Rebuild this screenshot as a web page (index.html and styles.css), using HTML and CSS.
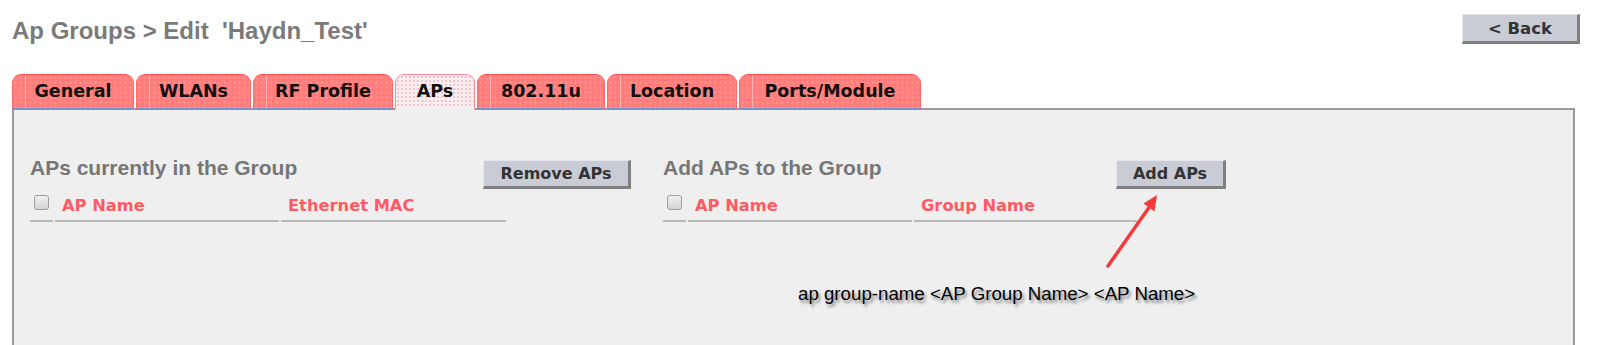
FILE: index.html
```html
<!DOCTYPE html>
<html>
<head>
<meta charset="utf-8">
<title>Ap Groups Edit</title>
<link rel="stylesheet" href="styles.css">
</head>
<body>
<div class="page">
  <header class="topbar">
    <h1 class="page-title">Ap Groups &gt; Edit&nbsp;&nbsp;'Haydn_Test'</h1>
    <button class="btn btn-back">&lt; Back</button>
  </header>

  <nav class="tabs">
    <span class="tab tab-general">General</span>
    <span class="tab tab-wlans">WLANs</span>
    <span class="tab tab-rf">RF Profile</span>
    <span class="tab tab-aps tab-active">APs</span>
    <span class="tab tab-80211u">802.11u</span>
    <span class="tab tab-location">Location</span>
    <span class="tab tab-ports">Ports/Module</span>
  </nav>

  <section class="panel">
    <div class="sections">
      <div class="section section-left">
        <div class="section-head head-left">
          <h2 class="section-title">APs currently in the Group</h2>
          <button class="btn btn-action">Remove APs</button>
        </div>
        <div class="grid grid-left">
          <div class="cell cell-check"><input type="checkbox" class="check"></div>
          <div class="cell">AP Name</div>
          <div class="cell">Ethernet MAC</div>
        </div>
      </div>
      <div class="section section-right">
        <div class="section-head head-right">
          <h2 class="section-title">Add APs to the Group</h2>
          <button class="btn btn-action">Add APs</button>
        </div>
        <div class="grid grid-right">
          <div class="cell cell-check"><input type="checkbox" class="check"></div>
          <div class="cell">AP Name</div>
          <div class="cell">Group Name</div>
        </div>
      </div>
    </div>
  </section>

  <svg class="arrow" width="1598" height="345" viewBox="0 0 1598 345">
    <line x1="1108" y1="266" x2="1149" y2="207.5" stroke="#f33b3b" stroke-width="3.5" stroke-linecap="round"/>
    <polygon points="1157,195 1154.5,211.5 1143.5,203.5" fill="#f33b3b"/>
  </svg>
  <div class="annotation">ap group-name &lt;AP Group Name&gt; &lt;AP Name&gt;</div>
</div>
</body>
</html>
```

FILE: styles.css
```css
html, body {
  margin: 0;
  padding: 0;
  background: #ffffff;
  overflow: hidden;
}

.page {
  position: relative;
  width: 1598px;
  height: 345px;
  overflow: hidden;
}

.topbar {
  display: flex;
  justify-content: space-between;
  align-items: flex-start;
  padding: 14px 18px 0 12px;
  height: 74px;
  box-sizing: border-box;
}

.page-title {
  margin: 3px 0 0 0;
  font-family: "Liberation Sans", Arial, sans-serif;
  font-weight: bold;
  font-size: 24px;
  line-height: 27px;
  color: #7a7a7a;
}

.btn {
  font-family: "DejaVu Sans", Verdana, sans-serif;
  font-weight: bold;
  color: #333333;
  background: #c9cbd5;
  border-style: solid;
  border-width: 1px 3px 3px 1px;
  border-color: #e6e6ec #808080 #808080 #e6e6ec;
  padding: 0;
  cursor: pointer;
}

.btn-back {
  width: 118px;
  height: 30px;
  font-size: 16.5px;
}

.tabs {
  display: flex;
  gap: 2px;
  padding-left: 12px;
  margin-bottom: -2px;
  position: relative;
  z-index: 1;
}

.tab {
  display: block;
  box-sizing: border-box;
  height: 36px;
  line-height: 33px;
  padding: 0;
  text-align: center;
  font-family: "DejaVu Sans", Verdana, sans-serif;
  font-weight: bold;
  font-size: 17.5px;
  color: #111111;
  border: 1px solid #ff6a6a;
  border-top-color: #ff5252;
  border-bottom: 2px solid #7394d0;
  border-radius: 9px 9px 0 0;
  background-color: #ff7d7d;
  background-image:
    linear-gradient(90deg, transparent 12px, #ffb3b3 12px, #ffb3b3 13px, transparent 13px),
    radial-gradient(circle, #ff9c8c 0.8px, transparent 1.2px);
  background-size: 100% 100%, 5px 5px;
}

.tab-general { width: 122px; }
.tab-wlans { width: 115px; }
.tab-rf { width: 140px; }
.tab-aps { width: 80px; }
.tab-80211u { width: 128px; }
.tab-location { width: 130px; }
.tab-ports { width: 182px; }

.tab-active {
  background-color: #fbeef0;
  background-image: radial-gradient(circle, #f5c2cc 0.9px, transparent 1.3px);
  background-size: 4px 4px;
  border-color: #ff8a98;
  border-bottom: 2px solid #efefef;
}

.panel {
  margin: 0 23px 0 12px;
  height: 250px;
  background: #efefef;
  border: 2px solid #9a9a9a;
  border-bottom: none;
  padding: 46px 0 0 16px;
  box-sizing: border-box;
}

.sections {
  display: flex;
}

.section-left {
  width: 633px;
}

.section-head {
  display: flex;
  justify-content: space-between;
  align-items: flex-start;
}

.head-left {
  width: 601px;
}

.head-right {
  width: 563px;
}

.section-title {
  margin: 0;
  font-family: "Liberation Sans", Arial, sans-serif;
  font-weight: bold;
  font-size: 21px;
  line-height: 24px;
  color: #767676;
}

.btn-action {
  margin-top: 4px;
  height: 29px;
  font-size: 16px;
}

.head-left .btn-action {
  width: 148px;
}

.head-right .btn-action {
  width: 110px;
}

.grid {
  display: grid;
  column-gap: 2px;
  margin-top: 7px;
}

.grid-left {
  grid-template-columns: 23px 224px 225px;
}

.grid-right {
  grid-template-columns: 23px 224px 223px;
}

.cell {
  font-family: "DejaVu Sans", Verdana, sans-serif;
  font-weight: bold;
  font-size: 16.3px;
  line-height: 19px;
  color: #ff5a64;
  padding: 0 0 5px 7px;
  border-bottom: 2px solid #b9b9b9;
}

.cell-check {
  padding: 0 0 5px 4px;
}

.check {
  -webkit-appearance: none;
  appearance: none;
  display: block;
  margin: -1px 0 0 0;
  width: 15px;
  height: 15px;
  box-sizing: border-box;
  border: 1px solid #9d9d9d;
  border-radius: 3px;
  background: linear-gradient(#f0f0f0, #d4d4d4);
}

.arrow {
  position: absolute;
  left: 0;
  top: 0;
  pointer-events: none;
  z-index: 2;
}

.annotation {
  position: absolute;
  left: 798px;
  top: 283px;
  font-family: "Liberation Sans", Arial, sans-serif;
  font-size: 18.7px;
  line-height: 22px;
  color: #000000;
  white-space: nowrap;
  text-shadow: 2px 3px 3px rgba(0, 0, 0, 0.45);
  z-index: 2;
}
```
